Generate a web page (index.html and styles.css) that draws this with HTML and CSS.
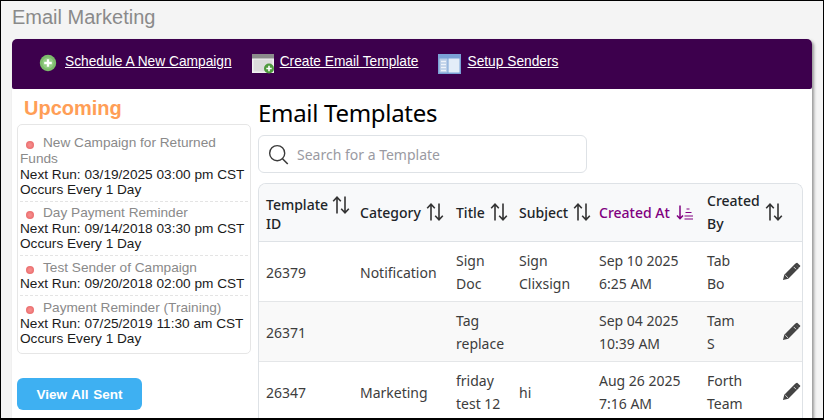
FILE: index.html
```html
<!DOCTYPE html>
<html lang="en">
<head>
<meta charset="utf-8">
<title>Email Marketing</title>
<link rel="stylesheet" href="styles.css">
</head>
<body>
<svg class="defs" width="0" height="0" aria-hidden="true">
  <defs>
    <symbol id="sort" viewBox="0 0 18 18">
      <path d="M5 17.5V1.5M1.2 5.2 5 1.2 8.8 5.2M13 .5v16M9.2 12.8 13 16.8 16.8 12.8" fill="none" stroke="currentColor" stroke-width="1.6"/>
    </symbol>
    <symbol id="pencil" viewBox="0 0 20 20">
      <path d="M1 19l1.4-5.6L13.6 2.2l4.2 4.2L6.6 17.6zM15 1l1-.3 3.3 3.3-.3 1-1.3 1.1-4.1-4.1z" fill="#444"/>
      <path d="M3.4 13.8l3 3M12.4 5.2l2.4 2.4" stroke="#fff" stroke-width=".8"/>
    </symbol>
  </defs>
</svg>
<main class="frame">
  <h1 class="page-title">Email Marketing</h1>
  <section class="card">
    <nav class="toolbar">
      <a class="tool" href="#">
        <svg class="ico-plus" viewBox="0 0 18 18"><circle cx="9" cy="9" r="8.2" fill="#7dbb6c"/><circle cx="9" cy="9" r="5.6" fill="#93cc84"/><path d="M9 5.2v7.6M5.2 9h7.6" stroke="#fff" stroke-width="2.4"/></svg>
        <span>Schedule A New Campaign</span>
      </a>
      <a class="tool" href="#">
        <svg class="ico-tpl" viewBox="0 0 23 20"><rect width="22" height="19" fill="#f2f2f2"/><rect x="0" y="0" width="22" height="4.5" fill="#8b8b8b"/><rect x="1.5" y="5.5" width="19" height="12" fill="#dcdcdc"/><circle cx="17" cy="14.5" r="5" fill="#4f9a3d"/><path d="M17 11.8v5.4M14.3 14.5h5.4" stroke="#fff" stroke-width="1.6"/></svg>
        <span>Create Email Template</span>
      </a>
      <a class="tool" href="#">
        <svg class="ico-set" viewBox="0 0 23 20"><rect width="23" height="20" fill="#7ba2d6"/><rect x="1.5" y="4.5" width="8" height="14" fill="#b9cde6"/><rect x="10.5" y="4.5" width="11" height="14" fill="#e3edf8"/><path d="M3 7.5h5M3 10.5h5M3 13.5h5M3 16.5h5" stroke="#eef3fa" stroke-width="1.4"/></svg>
        <span>Setup Senders</span>
      </a>
    </nav>
    <div class="content">
      <aside class="side">
        <h2 class="upcoming">Upcoming</h2>
        <ul class="camp-list">
          <li class="camp">
            <div class="camp-name"><i class="dot"></i>New Campaign for Returned Funds</div>
            <div class="camp-line">Next Run: 03/19/2025 03:00 pm CST</div>
            <div class="camp-line">Occurs Every 1 Day</div>
          </li>
          <li class="camp">
            <div class="camp-name"><i class="dot"></i>Day Payment Reminder</div>
            <div class="camp-line">Next Run: 09/14/2018 03:30 pm CST</div>
            <div class="camp-line">Occurs Every 1 Day</div>
          </li>
          <li class="camp">
            <div class="camp-name"><i class="dot"></i>Test Sender of Campaign</div>
            <div class="camp-line">Next Run: 09/20/2018 02:00 pm CST</div>
          </li>
          <li class="camp">
            <div class="camp-name"><i class="dot"></i>Payment Reminder (Training)</div>
            <div class="camp-line">Next Run: 07/25/2019 11:30 am CST</div>
            <div class="camp-line">Occurs Every 1 Day</div>
          </li>
        </ul>
        <button class="view-all" type="button">View All Sent</button>
      </aside>
      <div class="main">
        <h2 class="main-title">Email Templates</h2>
        <label class="search">
          <svg class="search-ico" viewBox="0 0 24 24"><circle cx="10.5" cy="10.5" r="8.6" fill="none" stroke="#3b3b3b" stroke-width="1.6"/><path d="M16.6 16.8l6 6" stroke="#3b3b3b" stroke-width="1.8"/></svg>
          <input type="text" placeholder="Search for a Template">
        </label>
        <div class="table-wrap">
          <table class="tpl">
            <colgroup><col class="c1"><col class="c2"><col class="c3"><col class="c4"><col class="c5"><col class="c6"><col class="c7"></colgroup>
            <thead>
              <tr>
                <th><div class="th th-raise"><span class="th-wrap th-id">Template ID</span><svg class="sort"><use href="#sort"/></svg></div></th>
                <th><div class="th"><span>Category</span><svg class="sort"><use href="#sort"/></svg></div></th>
                <th><div class="th"><span>Title</span><svg class="sort"><use href="#sort"/></svg></div></th>
                <th><div class="th"><span>Subject</span><svg class="sort"><use href="#sort"/></svg></div></th>
                <th class="active"><div class="th"><span>Created At</span><svg class="sort-act" viewBox="0 0 18 15"><path d="M4 .5v13M1 10.5l3 3.2 3-3.2" fill="none" stroke="currentColor" stroke-width="1.5"/><path d="M10.5 4h3M9.5 7.5h6M8.5 11h8.5M8.5 14h8.5" stroke="currentColor" stroke-width="1.2"/></svg></div></th>
                <th><div class="th"><span class="th-wrap th-by">Created By</span><svg class="sort"><use href="#sort"/></svg></div></th>
                <th></th>
              </tr>
            </thead>
            <tbody>
              <tr>
                <td>26379</td><td>Notification</td><td>Sign Doc</td><td>Sign Clixsign</td>
                <td>Sep 10 2025<br>6:25 AM</td><td>Tab<br>Bo</td>
                <td><svg class="edit"><use href="#pencil"/></svg></td>
              </tr>
              <tr>
                <td>26371</td><td></td><td>Tag replace</td><td></td>
                <td>Sep 04 2025<br>10:39 AM</td><td>Tam<br>S</td>
                <td><svg class="edit"><use href="#pencil"/></svg></td>
              </tr>
              <tr>
                <td>26347</td><td>Marketing</td><td>friday test 12</td><td>hi</td>
                <td>Aug 26 2025<br>7:16 AM</td><td>Forth<br>Team</td>
                <td><svg class="edit"><use href="#pencil"/></svg></td>
              </tr>
            </tbody>
          </table>
        </div>
      </div>
    </div>
  </section>
</main>
</body>
</html>
```

FILE: styles.css
```css
* { box-sizing: border-box; }
html, body { margin: 0; height: 100%; }
body { overflow: hidden; font-family: "Liberation Sans", Arial, sans-serif; }
.defs { position: absolute; }
.frame {
  width: 824px; height: 420px; overflow: hidden;
  background: #f4f4f4;
  border: 1px solid #000; border-bottom-width: 2px;
  padding: 0 11px 0 11px;
}
.page-title {
  margin: 0; padding-top: 4px; height: 38px;
  font-size: 20px; line-height: 24px; font-weight: 400; color: #8a8a8a;
}
.card {
  width: 800px; height: 400px; background: #fff;
  box-shadow: 2px 2px 3px #999; border-radius: 5px;
}
.toolbar {
  height: 50px; background: #3d004d; border-radius: 5px 5px 2px 2px;
  display: flex; align-items: center; padding: 0 0 4px 27px;
}
.tool {
  display: flex; align-items: center; color: #fff;
  font-size: 13.75px; line-height: 16px; margin-right: 20px;
}
.ico-plus { width: 18px; height: 18px; margin-right: 8px; margin-top: 2px; }
.ico-tpl { width: 23px; height: 20px; margin-right: 5px; margin-top: 3px; }
.ico-set { width: 23px; height: 20px; margin-right: 6px; margin-top: 3px; }
.content { display: flex; height: 350px; }
.side { width: 246px; flex: none; padding: 8px 0 0 5px; }
.upcoming { margin: 0 0 4px 7px; font-size: 20px; line-height: 23px; font-weight: 700; color: #ff9e56; }
.camp-list {
  list-style: none; margin: 0; width: 234px; height: 230px; padding: 10px 2px 0 2px;
  border: 1px solid #e6e6e6; border-radius: 5px;
  font-size: 13.65px; line-height: 15px; color: #1a1a1a;
}
.camp { padding-bottom: 4px; margin-bottom: 4px; border-bottom: 1px dashed #e4e4e4; }
.camp:first-child { margin-bottom: 3px; }
.camp:last-child { border-bottom: 0; }
.camp-name { color: #8a8a8a; line-height: 16px; }
.camp-line { white-space: nowrap; }
.dot {
  display: inline-block; width: 8px; height: 8px; margin: 0 9px 0 6px; vertical-align: -2px;
  border-radius: 50%; background: radial-gradient(circle, #f58a8a 20%, #e45c5c 100%);
}
.view-all {
  display: block; margin-top: 24px; width: 125px; height: 32px;
  background: #3eb0f2; color: #fff; border: 0; border-radius: 6px;
  font: 700 13.5px "Liberation Sans", Arial, sans-serif; word-spacing: 1px;
}
.main { flex: 1; padding-top: 6px; min-width: 0; }
.main-title {
  margin: 0 0 5px; font-family: "Noto Sans", sans-serif;
  font-size: 24px; line-height: 35px; font-weight: 400; color: #000; letter-spacing: -0.3px;
}
.search {
  display: flex; align-items: center; width: 329px; height: 38px;
  border: 1px solid #dee2e6; border-radius: 6px; padding-left: 9px; background: #fff;
}
.search-ico { width: 21px; height: 21px; flex: none; margin-right: 8px; }
.search input {
  border: 0; outline: 0; flex: 1; min-width: 0; background: none; padding: 0;
  font: 14px "Noto Sans", sans-serif; color: #333;
}
.search input::placeholder { color: #9a9aa2; opacity: 1; }
.table-wrap {
  margin-top: 10px; width: 545px; height: 262px; overflow: hidden;
  border: 1px solid #dee2e6; border-bottom: 0; border-radius: 8px 8px 0 0;
}
.tpl {
  width: 544px; table-layout: fixed; border-collapse: collapse;
  font: 14px/23px "Noto Sans", sans-serif; color: #3d3d3d;
}
.c1 { width: 94px; } .c2 { width: 96px; } .c3 { width: 63px; } .c4 { width: 80px; }
.c5 { width: 108px; } .c6 { width: 82px; } .c7 { width: 21px; }
.tpl thead tr { height: 57px; background: #f8f9fa; }
.tpl th { padding: 0 0 0 7px; text-align: left; font-weight: 500; color: #212529; border-bottom: 1px solid #dee2e6; }
.tpl th.active { color: #800080; }
.th { display: flex; align-items: center; }
.th span { flex: none; }
.th-wrap { width: 63px; }
.th-id { line-height: 19px; padding-top: 4px; }
.th-by { width: 53px; }
.th-raise .sort { margin-top: -15px; margin-left: 3px; }
.sort { width: 18px; height: 18px; flex: none; margin-left: 5px; color: #333; }
.sort-act { width: 18px; height: 15px; flex: none; margin-left: 6px; }
.tpl tbody tr { height: 60px; border-bottom: 1px solid #e4e6e8; }
.tpl tbody tr:nth-child(even) { background: #f9f9f9; }
.tpl td { padding: 2px 0 0 7px; vertical-align: middle; }
.tpl td:last-child { padding: 0; }
.edit { display: block; width: 19px; height: 19px; }
```
